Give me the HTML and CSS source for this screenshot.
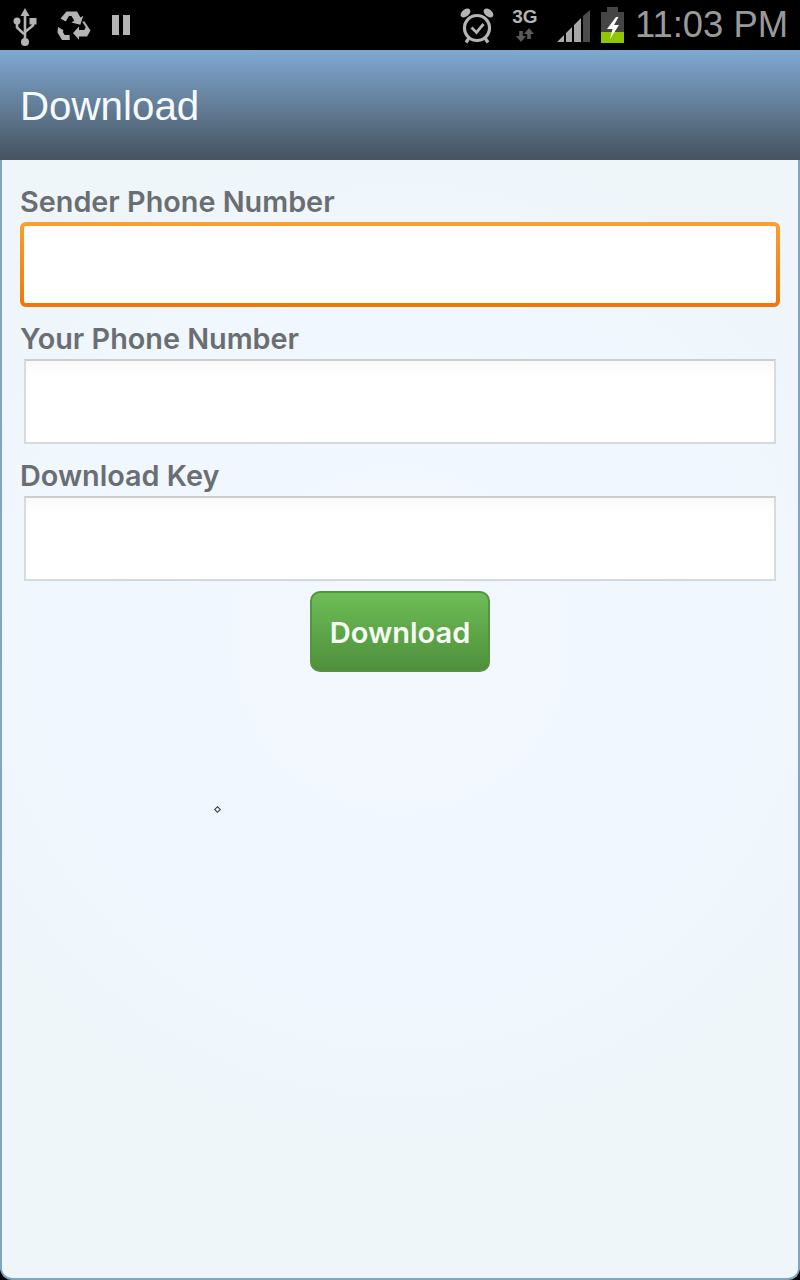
FILE: index.html

```html
<!DOCTYPE html>
<html lang="en">
<head>
  <meta charset="UTF-8" />
  <meta name="viewport" content="width=device-width, initial-scale=1.0" />
  <title>Download</title>
  <link rel="stylesheet" href="styles.css">
</head>
<body>
  <div class="status-bar">
    <div class="status-left">
      <svg class="icon-usb" width="26" height="40" viewBox="0 0 26 40">
        <path d="M13 0l4.500 8h-3.200v22.500h-2.600V8H8.500z" fill="#b4b4b4"/>
        <path d="M5 14v5.500l7 6.500M21 14v3.500l-8 6.500" fill="none" stroke="#b4b4b4" stroke-width="2.600"/>
        <circle cx="5" cy="13" r="3.500" fill="#b4b4b4"/>
        <rect x="17.500" y="10" width="7" height="6.500" fill="#b4b4b4"/>
        <circle cx="13" cy="34" r="4" fill="#b4b4b4"/>
      </svg>
      <svg class="icon-recycle" width="34" height="30" viewBox="0 0 34 30">
        <path d="M9.500 1.500h10.500l3.500 6 2.800-1.700-3 9-9-2.300 3-1.700-2.800-4.800h-2.500l-3.300 5.500-5.200-3z" fill="#b4b4b4"/>
        <path d="M1 17l5.200 3-.1 2.500 1.600 2.500h5v5H5L.5 22.500z" fill="#b4b4b4"/>
        <path d="M27.500 13.500l6 9-3.500 6h-8v3.200l-6-6.700 6-6.500v3.500h5.300l1.500-2.800-3.700-5.600z" fill="#b4b4b4" transform="translate(0 -2)"/>
      </svg>
      <div class="icon-pause"><span></span><span></span></div>
    </div>
    <div class="status-right">
      <svg class="icon-alarm" width="36" height="36" viewBox="0 0 36 36">
        <circle cx="18" cy="20" r="12.500" fill="none" stroke="#b4b4b4" stroke-width="3.200"/>
        <ellipse cx="6.500" cy="5" rx="5.500" ry="3.600" fill="#b4b4b4" transform="rotate(-38 6.500 5)"/>
        <ellipse cx="29.500" cy="5" rx="5.500" ry="3.600" fill="#b4b4b4" transform="rotate(38 29.500 5)"/>
        <path d="M12.500 19.500l5 5 7-8.500" fill="none" stroke="#b4b4b4" stroke-width="2.800"/>
        <path d="M10 30l-3 4.500M26 30l3 4.500" stroke="#b4b4b4" stroke-width="3.200"/>
      </svg>
      <div class="net">
        <span class="net-label">3G</span>
        <svg width="20" height="14" viewBox="0 0 20 14">
          <path d="M6 14l-5-6h3.200V3h3.600v5H11zM14 0l5 6h-3.200v5h-3.600V6H9z" fill="#5a5a5a"/>
        </svg>
      </div>
      <svg class="icon-signal" width="33" height="32" viewBox="0 0 33 32">
        <path d="M0 32l7-7v7zM9 32v-9l6-6v15zM17 32V15l7-7v24z" fill="#a8a8a8"/>
        <path d="M26 32V6l7-6v32z" fill="#4c4c4c"/>
      </svg>
      <svg class="icon-battery" width="23" height="36" viewBox="0 0 23 36">
        <path d="M6 0h11v5h6v21H0V5h6z" fill="#454545"/>
        <rect y="25" width="23" height="11" fill="#8fc700"/>
        <path d="M15 10L6 22h5.500L9 32l9-14h-5l4.500-8z" fill="#fff"/>
      </svg>
      <span class="clock">11:03 PM</span>
    </div>
  </div>

  <header class="title-bar">Download</header>
  <main class="form">
    <label class="field-label" for="sender">Sender Phone Number</label>
    <input class="field-input field-focused" id="sender" type="text" />
    <label class="field-label" for="yours">Your Phone Number</label>
    <input class="field-input" id="yours" type="text" />
    <label class="field-label" for="key">Download Key</label>
    <input class="field-input" id="key" type="text" />
    <button class="download-btn">Download</button>
    <span class="cursor-dot"></span>
  </main>
</body>
</html>
```

FILE: styles.css

```css
html, body { margin: 0; padding: 0; background: #000; }
body { width: 800px; height: 1280px; overflow: hidden; font-family: "Liberation Sans", Arial, sans-serif; }

.status-bar { height: 50px; background: #000; display: flex; justify-content: space-between; align-items: center; }
.status-left { display: flex; align-items: center; padding-left: 12px; }
.status-right { display: flex; align-items: center; padding-right: 12px; }
.icon-usb { display: block; margin-top: 5px; }
.icon-recycle { display: block; margin-left: 19px; }
.icon-pause { display: flex; gap: 4px; margin-left: 21px; }
.icon-pause span { display: block; width: 7px; height: 20px; background: #b4b4b4; }
.icon-alarm { display: block; margin-top: 2px; }
.net { display: flex; flex-direction: column; align-items: center; width: 26px; margin-left: 17px; }
.net-label { font-size: 19px; line-height: 18px; font-weight: bold; color: #b4b4b4; }
.net svg { display: block; margin-top: 2px; }
.icon-signal { display: block; margin-left: 19px; margin-top: 2px; }
.icon-battery { display: block; margin-left: 11px; }
.clock { font-size: 36.400px; line-height: 52px; color: #9a9a9a; margin-left: 11px; white-space: nowrap; }

.title-bar { height: 110px; padding-left: 20px; font-size: 40.300px; line-height: 114px; color: #f6f9fb; background: linear-gradient(#80a9d2, #46535f); }

.form { position: relative; display: flex; flex-direction: column; height: 1120px; box-sizing: border-box; padding: 20px 18px 0; border: 2px solid #7fa6c8; border-top: 0; border-radius: 0 0 12px 12px; background: radial-gradient(circle at 50% 43%, #f3f8ff 0%, #f1f7fe 45%, #eef6fa 70%); }
.field-label { height: 42px; font-family: Inter, "Liberation Sans", sans-serif; font-size: 28.800px; line-height: 44px; font-weight: 600; color: #6a6e72; }
.field-input { display: block; height: 85px; box-sizing: border-box; margin: 0 4px 10px; padding: 0 12px; background: linear-gradient(#f9f9f9, #fff 16px); border: 2px solid #d6dadb; border-top-color: #cbcecf; outline: none; }
.field-focused { margin: 0 0 10px; border: 4px solid transparent; border-radius: 6px; background: linear-gradient(#fff, #fff) padding-box, linear-gradient(#ff9d2e, #ee780a) border-box; }

.download-btn { align-self: center; width: 180px; height: 81px; box-sizing: border-box; padding: 1px 0 0; font-family: Inter, "Liberation Sans", sans-serif; font-size: 29px; font-weight: 600; color: #f6fbf3; background: linear-gradient(#6dbe57, #4f8f3c); border: 2px solid #56923f; border-radius: 10px; }
.cursor-dot { position: absolute; left: 213px; top: 647px; width: 3px; height: 3px; background: #fff; border: 1px solid #333; transform: rotate(45deg); }
```
